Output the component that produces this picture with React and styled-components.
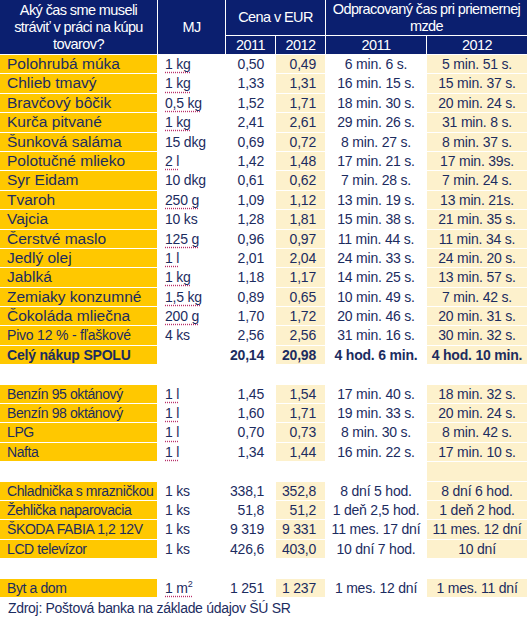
import React from 'react';
import styled, { createGlobalStyle } from 'styled-components';

const GlobalStyle = createGlobalStyle`
  body {
    margin: 0;
    background: #fff;
    font-family: "Liberation Sans", Arial, sans-serif;
  }
`;

const NAVY = '#0b1f6f';
const INK = '#1c2c5f';
const GOLD = '#ffc800';
const CREAM = '#fdf1cc';

const fits = {
  wide: 'font-size: 15.5px; letter-spacing: 0;',
  narrow: 'letter-spacing: -0.4px;',
};

const Sheet = styled.div`
  width: 527px;
  display: grid;
  grid-template-columns: 157px 67px 49px 49px 100px 100px;
  grid-template-rows: 35px 18px;
  grid-auto-rows: 18.4px;
  gap: 1px;
  color: ${INK};
  font-size: 14px;
  letter-spacing: -0.2px;
`;

const Head = styled.div`
  background: ${NAVY};
  color: #fff;
  display: flex;
  align-items: center;
  justify-content: center;
  text-align: center;
  font-size: 14.5px;
  line-height: 17px;
  letter-spacing: -0.6px;
  grid-column: ${({ $col }) => $col || 'auto'};
  grid-row: ${({ $row }) => $row || 'auto'};
`;

const Label = styled.div`
  background: ${GOLD};
  padding-left: 7px;
  line-height: 18px;
  white-space: nowrap;
  overflow: hidden;
  font-weight: ${({ $bold }) => ($bold ? 700 : 400)};
  ${({ $fit }) => fits[$fit] || ''}
`;

const Unit = styled.div`
  padding-left: 7px;
  line-height: 18px;
  white-space: nowrap;

  span {
    text-decoration: ${({ $mark }) => ($mark ? 'underline dotted #b8306a' : 'none')};
    text-underline-offset: 3px;
  }

  sup {
    font-size: 9px;
    line-height: 0;
  }
`;

const Price = styled.div`
  background: ${({ $hl }) => ($hl ? CREAM : 'transparent')};
  text-align: right;
  padding-right: ${({ $hl }) => ($hl ? '9px' : '11px')};
  line-height: 18px;
  white-space: nowrap;
  font-weight: ${({ $bold }) => ($bold ? 700 : 400)};
`;

const Time = styled.div`
  background: ${({ $hl }) => ($hl ? CREAM : 'transparent')};
  text-align: center;
  line-height: 18px;
  white-space: nowrap;
  font-weight: ${({ $bold }) => ($bold ? 700 : 400)};
`;

const Source = styled.p`
  margin: 2px 0 0;
  padding-left: 8px;
  color: ${INK};
  font-size: 14px;
  letter-spacing: -0.3px;
  line-height: 18px;
`;

const food = [
  ['Polohrubá múka', '1 kg', true, '0,50', '0,49', '6 min. 6 s.', '5 min. 51 s.'],
  ['Chlieb tmavý', '1 kg', true, '1,33', '1,31', '16 min. 15 s.', '15 min. 37 s.'],
  ['Bravčový bôčik', '0,5 kg', true, '1,52', '1,71', '18 min. 30 s.', '20 min. 24 s.'],
  ['Kurča pitvané', '1 kg', true, '2,41', '2,61', '29 min. 26 s.', '31 min. 8 s.'],
  ['Šunková saláma', '15 dkg', false, '0,69', '0,72', '8 min. 27 s.', '8 min. 37 s.'],
  ['Polotučné mlieko', '2 l', true, '1,42', '1,48', '17 min. 21 s.', '17 min. 39s.'],
  ['Syr Eidam', '10 dkg', false, '0,61', '0,62', '7 min. 28 s.', '7 min. 24 s.'],
  ['Tvaroh', '250 g', true, '1,09', '1,12', '13 min. 19 s.', '13 min. 21s.'],
  ['Vajcia', '10 ks', false, '1,28', '1,81', '15 min. 38 s.', '21 min. 35 s.'],
  ['Čerstvé maslo', '125 g', true, '0,96', '0,97', '11 min. 44 s.', '11 min. 34 s.'],
  ['Jedlý olej', '1 l', true, '2,01', '2,04', '24 min. 33 s.', '24 min. 20 s.'],
  ['Jablká', '1 kg', true, '1,18', '1,17', '14 min. 25 s.', '13 min. 57 s.'],
  ['Zemiaky konzumné', '1,5 kg', true, '0,89', '0,65', '10 min. 49 s.', '7 min. 42 s.'],
  ['Čokoláda mliečna', '200 g', true, '1,70', '1,72', '20 min. 46 s.', '20 min. 31 s.'],
];

const beer = ['Pivo 12 % - fľaškové', '4 ks', false, '2,56', '2,56', '31 min. 16 s.', '30 min. 32 s.'];
const total = ['Celý nákup SPOLU', '', false, '20,14', '20,98', '4 hod. 6 min.', '4 hod. 10 min.'];

const fuel = [
  ['Benzín 95 oktánový', '1 l', true, '1,45', '1,54', '17 min. 40 s.', '18 min. 32 s.'],
  ['Benzín 98 oktánový', '1 l', true, '1,60', '1,71', '19 min. 33 s.', '20 min. 24 s.'],
  ['LPG', '1 l', true, '0,70', '0,73', '8 min. 30 s.', '8 min. 42 s.'],
  ['Nafta', '1 l', true, '1,34', '1,44', '16 min. 22 s.', '17 min. 10 s.'],
];

const goods = [
  ['Chladnička s mrazničkou', '1 ks', false, '338,1', '352,8', '8 dní 5 hod.', '8 dní 6 hod.'],
  ['Žehlička naparovacia', '1 ks', false, '51,8', '51,2', '1 deň 2,5 hod.', '1 deň 2 hod.'],
  ['ŠKODA FABIA 1,2 12V', '1 ks', false, '9\u00a0319', '9\u00a0331', '11 mes. 17 dní', '11 mes. 12 dní'],
  ['LCD televízor', '1 ks', false, '426,6', '403,0', '10 dní 7 hod.', '10 dní'],
];

const Row = ({ item, bold, fit }) => {
  const [name, unit, mark, p11, p12, t11, t12] = item;
  return (
    <>
      <Label $bold={bold} $fit={fit}>{name}</Label>
      <Unit $mark={mark}>{unit && <span>{unit}</span>}</Unit>
      <Price $bold={bold}>{p11}</Price>
      <Price $hl $bold={bold}>{p12}</Price>
      <Time $bold={bold}>{t11}</Time>
      <Time $hl $bold={bold}>{t12}</Time>
    </>
  );
};

const Blank = ({ tail }) => (
  <>
    <div />
    <div />
    <div />
    <div />
    <div />
    {tail ? <Time $hl /> : <div />}
  </>
);

const App = () => (
  <>
    <GlobalStyle />
    <Sheet>
      <Head $row="1 / 3">
        Aký čas sme museli
        <br />
        stráviť v práci na kúpu
        <br />
        tovarov?
      </Head>
      <Head $row="1 / 3">MJ</Head>
      <Head $col="3 / 5">Cena v EUR</Head>
      <Head $col="5 / 7">
        Odpracovaný čas pri priemernej
        <br />
        mzde
      </Head>
      <Head>2011</Head>
      <Head>2012</Head>
      <Head>2011</Head>
      <Head>2012</Head>

      {food.map((item) => (
        <Row key={item[0]} item={item} fit="wide" />
      ))}
      <Row item={beer} />
      <Row bold item={total} />
      <Blank />
      {fuel.map((item) => (
        <Row key={item[0]} item={item} fit="narrow" />
      ))}
      <Blank tail />
      {goods.map((item) => (
        <Row key={item[0]} item={item} fit="narrow" />
      ))}
      <Blank />
      <Label $fit="narrow">Byt a dom</Label>
      <Unit $mark>
        <span>
          1 m<sup>2</sup>
        </span>
      </Unit>
      <Price>1&nbsp;251</Price>
      <Price $hl>1&nbsp;237</Price>
      <Time>1 mes. 12 dní</Time>
      <Time $hl>1 mes. 11 dní</Time>
    </Sheet>
    <Source>Zdroj: Poštová banka na základe údajov ŠÚ SR</Source>
  </>
);

export default App;
